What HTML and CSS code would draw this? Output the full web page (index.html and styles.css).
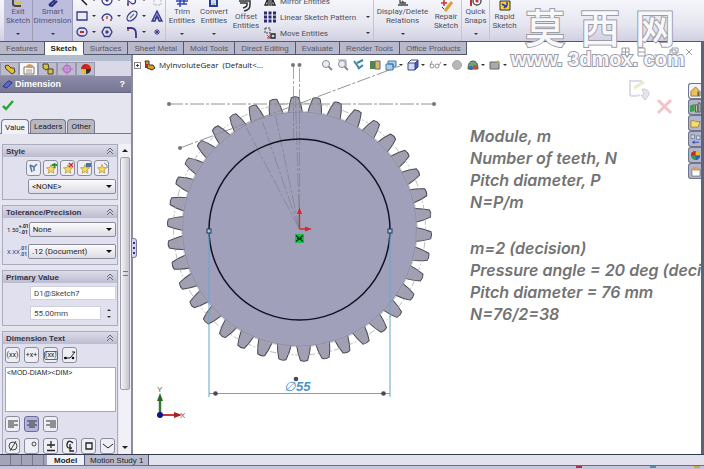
FILE: index.html
```html
<!DOCTYPE html>
<html lang="en">
<head>
<meta charset="utf-8">
<title>MyInvoluteGear</title>
<link rel="stylesheet" href="styles.css">
</head>
<body>
<svg class="defs" aria-hidden="true">
  <defs>
    <path id="t1" d="M-7-113V-116C-6.500-121-5.200-127-3.600-131.500Q0-133 3.600-131.500C5.200-127 6.500-121 7-116V-113"/>
    <g id="t2"><use href="#t1"/><use href="#t1" transform="rotate(9.4737)"/></g>
    <g id="t4"><use href="#t2"/><use href="#t2" transform="rotate(18.9474)"/></g>
    <g id="t8"><use href="#t4"/><use href="#t4" transform="rotate(37.8947)"/></g>
    <g id="t16"><use href="#t8"/><use href="#t8" transform="rotate(75.7895)"/></g>
    <g id="t32"><use href="#t16"/><use href="#t16" transform="rotate(151.5789)"/></g>
    <path id="star" d="M6 2.500 7.200 5.600 10.500 5.800 8 8 8.800 11.200 6 9.500 3.200 11.200 4 8 1.500 5.800 4.800 5.600Z" fill="#f8d860" stroke="#b09030" stroke-width=".7"/>
    <g id="lens" fill="none" stroke="#8a8a94"><circle cx="5" cy="5" r="3.500" fill="#e8eef4"/><path d="M7.500 7.500 11 11" stroke-width="2"/></g>
    <g id="wheel"><circle cx="6" cy="6" r="5" fill="#e8c020"/><path d="M6 6V1A5 5 0 0 1 11 6Z" fill="#d02828"/><path d="M6 6H11A5 5 0 0 1 6 11Z" fill="#303038"/><path d="M6 6V1A5 5 0 0 0 1 6Z" fill="#c82020"/></g>
  </defs>
</svg>

<header class="ribbon">
  <button class="tool on exit"><svg viewBox="0 0 16 7"><path d="M3 0V4Q3 6 6 6H11" fill="none" stroke="#504830" stroke-width="2"/><path d="M5 1 9 4 12 1" fill="none" stroke="#d8c040" stroke-width="2"/></svg><span>Exit<br>Sketch</span><i class="arrow"></i></button>
  <button class="tool on smart"><svg viewBox="0 0 16 7"><path d="M4 5 10 0M4 5 7 6 12 1" fill="none" stroke="#2a2a80" stroke-width="2"/></svg><span>Smart<br>Dimension</span><i class="arrow"></i></button>
  <div class="shapes">
    <button aria-label="Line"><svg viewBox="0 0 12 12"><path d="M1 1 11 11" stroke="#222" stroke-width="1.500"/></svg><i class="arrow"></i></button>
    <button aria-label="Circle"><svg viewBox="0 0 12 12"><circle cx="6" cy="6" r="5"/><circle cx="6" cy="6" r="1" fill="#c33"/></svg><i class="arrow"></i></button>
    <button aria-label="Spline"><svg viewBox="0 0 12 12"><path d="M2 0V12M3 7C7 13 12 8 8 4"/><path d="M1 10h2" stroke="#a33"/></svg><i class="arrow"></i></button>
    <button aria-label="Plane"><svg viewBox="0 0 12 12"><path d="M3 1H10V11H3Z" stroke="#c8c8d0" stroke-dasharray="2 1"/></svg></button>
    <button aria-label="Rectangle"><svg viewBox="0 0 12 12"><path d="M1 2H11V10H1Z"/></svg><i class="arrow"></i></button>
    <button aria-label="Arc"><svg viewBox="0 0 12 12"><path d="M1 9A5 5 0 1 1 11 9"/><path d="M1 10h2M9 10h2M6 6v3" stroke="#a33"/></svg><i class="arrow"></i></button>
    <button aria-label="Ellipse"><svg viewBox="0 0 12 12"><ellipse cx="6" cy="6" rx="6" ry="3.500" transform="rotate(-45 6 6)"/><path d="M4 8 8 4" stroke="#777"/></svg><i class="arrow"></i></button>
    <button aria-label="Text"><svg viewBox="0 0 12 12"><path d="M1 11 6 1 11 11H8L6 6 4 11ZM4 8H8" fill="#9a9ae0"/></svg></button>
    <button aria-label="Slot"><svg viewBox="0 0 12 12"><rect x="1" y="2" width="10" height="8" rx="4"/><path d="M4 6H8" stroke="#a33" stroke-width="2"/></svg><i class="arrow"></i></button>
    <button aria-label="Polygon"><svg viewBox="0 0 12 12"><path d="M3.500 1.500H8.500L11 6 8.500 10.500H3.500L1 6Z"/><circle cx="6" cy="6" r="1" fill="#44a"/></svg></button>
    <button aria-label="Fillet"><svg viewBox="0 0 12 12"><path d="M1 2H5Q10 2 10 8V12" stroke-width="1.800"/><path d="M1 4h2" stroke="#a33"/></svg><i class="arrow"></i></button>
    <button aria-label="Point"><svg viewBox="0 0 12 12"><path d="M6 3V9M3 6H9M4 4 8 8M8 4 4 8" stroke-width="1"/></svg></button>
  </div>
  <button class="tool trim"><svg viewBox="0 0 16 7"><path d="M2 1H14M3 4H13M6 0V7M10 0V4" fill="none" stroke="#3448b8" stroke-width="1.500"/></svg><span>Trim<br>Entities</span><i class="arrow"></i></button>
  <button class="tool convert"><svg viewBox="0 0 16 7"><path d="M4 0V6H11V0" fill="#cde" stroke="#2a3aa0" stroke-width="2"/><path d="M6 4h3" stroke="#9a6"/></svg><span>Convert<br>Entities</span><i class="arrow"></i></button>
  <button class="tool offset low"><svg viewBox="0 0 16 12"><path d="M2 3H9V5Q9 7 5 8M1 1H12V5Q12 10 6 11" fill="none" stroke="#333" stroke-width="1.500"/></svg><span>Offset<br>Entities</span></button>
  <div class="list">
    <button><svg viewBox="0 0 12 12"><path d="M1 10 4 3V10ZM11 10 8 3V10ZM6 1V11" fill="none" stroke="#222" stroke-width="1.300"/></svg>Mirror Entities</button>
    <button><svg viewBox="0 0 12 12"><path d="M0 2H12M0 6H12M0 10H12" stroke="#2a2a70" stroke-width="3" stroke-dasharray="3 1.500"/></svg>Linear Sketch Pattern<i class="arrow"></i></button>
    <button><svg viewBox="0 0 12 12"><path d="M1 1H6V6H1Z" fill="none" stroke="#444" stroke-dasharray="2 1"/><path d="M7 7H11V11H7Z" fill="none" stroke="#222" stroke-width="1.300"/><path d="M3 8 6 11M6 8V11H3" fill="none" stroke="#b33"/></svg>Move Entities<i class="arrow"></i></button>
  </div>
  <button class="tool relations"><svg viewBox="0 0 16 7"><path d="M3 5H13M5 0V3H11M7 1L9 3" fill="none" stroke="#444" stroke-width="1.300"/></svg><span>Display/Delete<br>Relations</span><i class="arrow"></i></button>
  <button class="tool repair low"><svg viewBox="0 0 16 12"><path d="M3 3H9M6 0V6" stroke="#c33" stroke-width="1.500"/><path d="M7 11 14 2" stroke="#e0a030" stroke-width="3"/><path d="M4 7 6 9" stroke="#333"/></svg><span>Repair<br>Sketch</span></button>
  <button class="tool snaps"><svg viewBox="0 0 16 7"><circle cx="9" cy="1" r="4" fill="none" stroke="#444" stroke-width="1.300"/><path d="M3 0V6" stroke="#b33" stroke-width="2"/><circle cx="9" cy="1" r="1.500" fill="#b33"/></svg><span>Quick<br>Snaps</span><i class="arrow"></i></button>
  <button class="tool rapid low"><svg viewBox="0 0 16 12"><path d="M3 1H13V10H3Z" fill="#f4d030" stroke="#333"/><path d="M5 4 10 7M10 2V5L7 8" stroke="#2a3ab0" stroke-width="1.500" fill="none"/></svg><span>Rapid<br>Sketch</span></button>
</header>

<div class="work">
  <nav class="tabs">
    <button>Features</button><button class="active">Sketch</button><button>Surfaces</button><button>Sheet Metal</button><button>Mold Tools</button><button>Direct Editing</button><button>Evaluate</button><button>Render Tools</button><button>Office Products</button>
  </nav>

  <div class="columns">
    <aside class="panel">
      <div class="panel-icons">
        <button aria-label="Features tree"><svg viewBox="0 0 12 12"><path d="M1 3 4 2 7 5 10 5 11 9 8 11 2 6Z" fill="#e8c030" stroke="#443"/></svg></button>
        <button class="active" aria-label="Properties"><svg viewBox="0 0 12 12"><path d="M1 4H11V11H1Z" fill="#fff" stroke="#776"/><path d="M3 3 6 1 10 2 9 5 5 5Z" fill="#d89850"/><path d="M3 7H9M3 9H9" stroke="#a88"/></svg></button>
        <button aria-label="Configurations"><svg viewBox="0 0 12 12"><path d="M1 1H6L7 5 4 7 1 5ZM6 6H11V11H6Z" fill="#d8c040" stroke="#443"/></svg></button>
        <button aria-label="Targets"><svg viewBox="0 0 12 12"><circle cx="6" cy="6" r="3.500" fill="none" stroke="#b868c8" stroke-width="1.500"/><path d="M6 0V12M0 6H12" stroke="#c070d0"/></svg></button>
        <button aria-label="Appearance"><svg viewBox="0 0 12 12"><use href="#wheel"/></svg></button>
      </div>
      <h1><svg viewBox="0 0 12 12"><path d="M1 8 7 2 11 4 5 10Z" fill="#5868c8" stroke="#223080"/></svg>Dimension<a href="#">?</a></h1>
      <button class="ok" aria-label="OK"><svg viewBox="0 0 12 12"><path d="M1 7 4 10 11 2" fill="none" stroke="#28a838" stroke-width="2.500"/></svg></button>
      <div class="subtabs"><button class="active">Value</button><button>Leaders</button><button>Other</button></div>
      <div class="scroll">
        <div class="groups">
          <section class="style-group">
            <h2>Style<svg viewBox="0 0 8 8"><path d="M1 4 4 1 7 4M1 7 4 4 7 7"/></svg></h2>
            <div class="row right">
              <button class="sq" aria-label="Default"><svg viewBox="0 0 12 12"><path d="M2 3 4 10M2 3 6 5 9 2M6 5 6 9" fill="none" stroke="#5878a0" stroke-width="1.500"/></svg></button>
              <button class="sq" aria-label="Add"><svg viewBox="0 0 12 12"><use href="#star"/><path d="M7 3H12M9.500 1V6" stroke="#289038" stroke-width="1.800"/></svg></button>
              <button class="sq" aria-label="Delete"><svg viewBox="0 0 12 12"><use href="#star"/><path d="M7 1 11 5M11 1 7 5" stroke="#c83030" stroke-width="1.500"/></svg></button>
              <button class="sq" aria-label="Save"><svg viewBox="0 0 12 12"><use href="#star"/><path d="M7 1H12V5H7Z" fill="#5070a8"/></svg></button>
              <button class="sq" aria-label="Load"><svg viewBox="0 0 12 12"><use href="#star"/><path d="M8 1 11 3V6" fill="none" stroke="#7888a0"/></svg></button>
            </div>
            <div class="row"><span class="pick"><select aria-label="Style"><option>&lt;NONE&gt;</option></select></span></div>
          </section>
          <section class="tol-group">
            <h2>Tolerance/Precision<svg viewBox="0 0 8 8"><path d="M1 4 4 1 7 4M1 7 4 4 7 7"/></svg></h2>
            <div class="row"><label for="tol" class="glyph">1.50<b>+.01<br>-.01</b></label><span class="pick"><select id="tol"><option>None</option></select></span></div>
            <div class="row"><label for="prec" class="glyph blue">X.XX<b>.01<br>.01</b></label><span class="pick"><select id="prec"><option>.12 (Document)</option></select></span></div>
          </section>
          <section class="value-group">
            <h2>Primary Value<svg viewBox="0 0 8 8"><path d="M1 4 4 1 7 4M1 7 4 4 7 7"/></svg></h2>
            <div class="row"><input aria-label="Dimension name" value="D1@Sketch7"></div>
            <div class="row"><input aria-label="Dimension value" value="55.00mm"><span class="spin"><i></i><i></i></span></div>
          </section>
          <section class="text-group">
            <h2>Dimension Text<svg viewBox="0 0 8 8"><path d="M1 4 4 1 7 4M1 7 4 4 7 7"/></svg></h2>
            <div class="row tools">
              <button class="sq">(xx)</button><button class="sq">+x+</button><button class="sq"><span class="ring">(xx)</span></button>
              <button class="sq" aria-label="Offset text"><svg viewBox="0 0 12 12"><path d="M0 9H6L11 3M8 3H11" fill="none" stroke="#222"/><circle cx="1.500" cy="9" r="1.300"/><circle cx="9" cy="9" r="1.300"/></svg></button>
            </div>
            <textarea aria-label="Dimension text" spellcheck="false">&lt;MOD-DIAM&gt;&lt;DIM&gt;</textarea>
            <div class="row tools">
              <button class="sq" aria-label="Left"><svg viewBox="0 0 12 12"><path d="M1 3H11M1 5H7M1 7H11M1 9H7" stroke="#333"/></svg></button>
              <button class="sq down" aria-label="Centre"><svg viewBox="0 0 12 12"><path d="M1 3H11M3 5H9M1 7H11M3 9H9" stroke="#333"/></svg></button>
              <button class="sq" aria-label="Right"><svg viewBox="0 0 12 12"><path d="M1 3H11M5 5H11M1 7H11M5 9H11" stroke="#333"/></svg></button>
            </div>
            <div class="row tools symbols">
              <button class="sq" aria-label="Diameter"><svg viewBox="0 0 12 12"><circle cx="6" cy="6" r="4" fill="none" stroke="#444"/><path d="M3 11 9 1" stroke="#444"/></svg></button>
              <button class="sq" aria-label="Degree"><svg viewBox="0 0 12 12"><circle cx="8" cy="4" r="2" fill="none" stroke="#444"/></svg></button>
              <button class="sq" aria-label="Plus/minus"><svg viewBox="0 0 12 12"><path d="M2 5H10M6 1V8M2 10.500H10" stroke="#222" stroke-width="1.300"/></svg></button>
              <button class="sq" aria-label="Centerline"><svg viewBox="0 0 12 12"><path d="M9 3Q4-1 3 4T8 8M6 4V11H10" fill="none" stroke="#222" stroke-width="1.300"/></svg></button>
              <button class="sq" aria-label="Square"><svg viewBox="0 0 12 12"><path d="M3 3H9V9H3Z" fill="none" stroke="#222" stroke-width="1.300"/></svg></button>
              <button class="sq" aria-label="Countersink"><svg viewBox="0 0 12 12"><path d="M1 4 6 8 11 4" fill="none" stroke="#222"/></svg></button>
            </div>
          </section>
        </div>
        <div class="bar"><i class="up"></i><div class="thumb"><span></span></div><i class="dn"></i></div>
      </div>
    </aside>
    <div class="splitter"><button aria-label="Collapse panel"><i></i><i></i><i></i></button></div>

    <main class="view">
      <svg class="drawing" viewBox="133 55 568 400" width="568" height="400">
        <g transform="translate(299.500 229)">
          <g transform="rotate(-2)" fill="#a0a0b2" stroke="#4a4a55" stroke-width="1">
            <use href="#t32"/><use href="#t4" transform="rotate(303.158)"/><use href="#t2" transform="rotate(341.053)"/>
          </g>
          <circle r="117" fill="#a0a0ba" stroke="#8a8aa0" stroke-width=".8"/>
          <circle r="126" fill="none" stroke="#a0a0a8" stroke-width=".7" stroke-dasharray="7 2 2 2"/>
          <circle r="118" fill="none" stroke="#aaaab4" stroke-width=".5"/>
          <path d="M0 0-53-101M0 0-37-107M0 0-24-113M0 0-4-131M0 0V-164M-6-164V-90" fill="none" stroke="#808090" stroke-width=".7" stroke-dasharray="14 2 3 2"/>
          <circle r="90.500" cy=".5" fill="none" stroke="#111122" stroke-width="1.500"/>
        </g>
        <g stroke="#88888e" stroke-width=".9" stroke-dasharray="14 2 3 2"><path d="M169 104H434M180 148 400 66"/></g>
        <g fill="#777"><circle cx="169" cy="104" r="2"/><circle cx="434" cy="104" r="2"/><circle cx="180" cy="148" r="2"/><circle cx="293" cy="65" r="2"/><circle cx="299.500" cy="65" r="2"/></g>
        <path d="M209 231V397M390 231V397M209 393.500H390" stroke="#68a4cc" fill="none"/>
        <g fill="#9cc8e0" stroke="#203850"><rect x="207" y="229" width="4" height="4"/><rect x="388" y="229" width="4" height="4"/></g>
        <g fill="#444a58"><circle cx="215.500" cy="393.500" r="2.300"/><circle cx="383.500" cy="393.500" r="2.300"/><circle cx="296" cy="379" r="2.300"/></g>
        <text class="dim" x="284" y="391">∅</text><text class="dim bold" x="296" y="391">55</text>
        <g stroke="#d82830" fill="#d82830"><path d="M299.500 229V213M299.500 229H306" fill="none" stroke-width="1.300"/><path d="M299.500 207 302 214H297ZM312 229 305 226.500V231.500Z" stroke="none"/></g>
        <path d="M295 234H304V243H295Z" fill="#18c048"/><path d="M296 235.500 303 241.500M303 235.500 296 241.500M297 238.500H302" stroke="#06391a" stroke-width="1.200"/>
        <path d="M160 415V398" stroke="#387838" stroke-width="2.500"/><path d="M160 393 163 401H157Z" fill="#286828"/>
        <path d="M160 415H175" stroke="#c83838" stroke-width="2"/><path d="M182 415 174 412V418Z" fill="#a82020"/><circle cx="160" cy="415" r="3" fill="#101090"/>
        <text class="axis y" x="157" y="392">Y</text><text class="axis x" x="180" y="418">X</text>
      </svg>

      <div class="topbar">
        <div class="tree"><span class="plus"></span><svg viewBox="0 0 12 12"><path d="M1 2H5V6H9L11 9 8 11 3 9Z" fill="#d8a020" stroke="#333"/><path d="M1 5H4V9H1Z" fill="#b82818"/></svg>MyInvoluteGear&nbsp; (Default&lt;...</div>
        <div class="hud">
          <button aria-label="Zoom to fit"><svg viewBox="0 0 12 12"><use href="#lens"/></svg></button>
          <button aria-label="Zoom to area"><svg viewBox="0 0 12 12"><use href="#lens"/><path d="M1 1H9V8" fill="none" stroke="#999"/></svg></button>
          <button aria-label="Previous view"><svg viewBox="0 0 12 12"><path d="M1 2 6 9M4 4 10 1M5 10 10 6" stroke="#3888a8" stroke-width="2"/></svg></button>
          <button aria-label="Section"><svg viewBox="0 0 12 12"><path d="M1 2H6V10H1Z" fill="#508848"/><path d="M6 2H11V10H6Z" fill="#d8b868" stroke="#666"/></svg></button>
          <button aria-label="View orientation"><svg viewBox="0 0 12 12"><path d="M1 5H8V11H1ZM3 2H11V8H8V5H3Z" fill="#a8d0e8" stroke="#4878a8"/></svg><i class="arrow"></i></button>
          <button aria-label="Display style"><svg viewBox="0 0 12 12"><path d="M1 4H8V11H1Z" fill="#d0dcff"/><path d="M8 4 11 1V8L8 11Z" fill="#5058b0"/><path d="M1 4 4 1H11L8 4H1V11H8L11 8V1M8 4V11" fill="none" stroke="#404880"/></svg><i class="arrow"></i></button>
          <button aria-label="Hide/show"><svg viewBox="0 0 12 12"><g fill="none" stroke="#8a949c"><circle cx="3" cy="7" r="2"/><circle cx="8" cy="7" r="2"/><path d="M1 6 3 2M10 6 12 3"/></g></svg><i class="arrow"></i></button>
          <button aria-label="Edit appearance"><svg viewBox="0 0 12 12"><circle cx="6" cy="6" r="4.500" fill="#b8b8b8" stroke="#aaa"/></svg></button>
          <button aria-label="Apply scene"><svg viewBox="0 0 12 12"><path d="M1 10Q1 2 6 2T11 10Z" fill="#68a878" stroke="#555"/><circle cx="4" cy="9" r="2" fill="#3868b8"/><circle cx="8" cy="8" r="2" fill="#c84838"/></svg><i class="arrow"></i></button>
          <button aria-label="View settings"><svg viewBox="0 0 12 12"><path d="M1 3H10V10H1Z" fill="#aaa" stroke="#666"/><path d="M8 1 11 3 8 6Z" fill="#a8b850"/></svg><i class="arrow"></i></button>
        </div>
      </div>

      <div class="notes">
        <p>Module, m</p><p>Number of teeth, N</p><p>Pitch diameter, P</p><p>N=P/m</p><p class="gap">m=2 (decision)</p><p>Pressure angle = 20 deg (decision)</p><p>Pitch diameter = 76 mm</p><p>N=76/2=38</p>
      </div>

      <svg class="corner" viewBox="0 0 46 42" aria-hidden="true"><path d="M14 4H2V18Q4 20 12 18" fill="none" stroke="#dcdce8" stroke-width="2"/><path d="M6 11 16 5" stroke="#e8ecc8" stroke-width="3"/><path d="M14 12Q22 12 21 18L17 23 13 18Q18 20 14 12Z" fill="#e4e4f0" stroke="#ccccdc"/><path d="M30 23 43 36M43 23 30 36" stroke="#f0c4c8" stroke-width="3"/></svg>

      <div class="task">
        <button class="active" aria-label="Resources"><svg viewBox="0 0 12 12"><path d="M1 6 6 1 11 6V11H1Z" fill="#f0c050" stroke="#875"/><path d="M8 6H10V11H8Z" fill="#666"/></svg></button>
        <button aria-label="Library"><svg viewBox="0 0 12 12"><path d="M0 4 5 2V10L0 11Z" fill="#38a048"/><path d="M6 3H8V11H6ZM9 1H11V11H9Z" fill="#d8d8c0" stroke="#555"/></svg></button>
        <button aria-label="Explorer"><svg viewBox="0 0 12 12"><path d="M1 3H5L6 4H11L9 10H1Z" fill="#f4dc78" stroke="#a08830"/></svg></button>
        <button aria-label="Palette"><svg viewBox="0 0 12 12"><path d="M1 1H5V5H1ZM7 2H11V6H7Z" fill="#c8d8e8" stroke="#789"/><path d="M2 9 5 7V11Z" fill="#2848c0"/><path d="M5 9H10" stroke="#2848c0"/></svg></button>
        <button aria-label="Appearances"><svg viewBox="0 0 12 12"><circle cx="6" cy="6" r="5" fill="#38a048"/><path d="M6 6V1A5 5 0 0 1 11 6Z" fill="#e8c020"/><path d="M6 6V1A5 5 0 0 0 1 6Z" fill="#c82828"/><path d="M6 6H11A5 5 0 0 1 6 11Z" fill="#3858b8"/></svg></button>
        <button aria-label="Custom properties"><svg viewBox="0 0 12 12"><path d="M2 4H11V11H2Z" fill="#fff" stroke="#777"/><path d="M1 3 5 1 10 2 9 5H4Z" fill="#d89868"/></svg></button>
      </div>
    </main>
  </div>
</div>

<footer>
  <div class="sheets">
    <div class="navs"><button aria-label="First"></button><button aria-label="Previous"></button><button aria-label="Next"></button><button aria-label="Last"></button></div>
    <button class="active">Model</button><button>Motion Study 1</button>
  </div>
  <div class="status"><i class="red"></i><i class="teal"></i><i class="gold"></i></div>
</footer>

<svg class="mdi" viewBox="0 0 72 10" aria-hidden="true"><g fill="none" stroke="#999ca8"><path d="M1 1H8V9H1ZM4.500 1V9M1 5H8M17 1H24V9H17ZM17 5H24M33 8H39M51 1H57V6H51ZM49 3H55V9H49ZM65 2 71 8M71 2 65 8"/></g></svg>
<div class="mark" lang="zh"><div class="han"><span>莫</span><span>西</span><span>网</span></div><div class="url">www. 3dmox. com</div></div>
</body>
</html>
```
FILE: styles.css
```css
* { box-sizing: border-box; margin: 0; padding: 0; }
body { height: 100vh; display: flex; flex-direction: column; overflow: hidden; position: relative; background: #fff; font: 8px/9px Roboto, "Liberation Sans", sans-serif; color: #222; }
button { font: inherit; color: inherit; border: 0; background: none; white-space: nowrap; }
svg { display: block; flex: none; }
.defs { position: absolute; width: 0; height: 0; }
.arrow { width: 0; height: 0; border: 2px solid transparent; border-top-color: #333; border-bottom: 0; flex: none; }

.ribbon { flex: none; height: 41px; display: flex; overflow: hidden; padding-left: 4px; background: linear-gradient(#f5f5fb, #e6e6f0 60%, #d0d0e2); color: #50505c; }
.tool { flex: none; display: flex; flex-direction: column; align-items: center; height: 41px; }
.tool svg { width: 16px; height: 7px; }
.tool.low svg { height: 12px; }
.tool .arrow { margin-top: 8px; }
.tool.on { background: #bcbcdc; border-right: 1px solid #9c9cb8; color: #55557c; }
.exit { width: 29px; }
.smart { width: 40px; }
.shapes { flex: none; display: grid; grid-template-columns: repeat(4, 25px); grid-template-rows: repeat(3, 16px); width: 92px; margin-top: -8px; padding-left: 3px; }
.shapes button { display: flex; align-items: center; gap: 4px; }
.shapes svg { width: 12px; height: 12px; fill: none; stroke: #38388c; stroke-width: 1.3; }
.trim { width: 33px; border-left: 1px solid #c4c4d4; }
.convert { width: 32px; }
.offset { width: 32px; }
.list { flex: none; width: 112px; margin-top: -7px; padding-left: 2px; display: grid; grid-template-rows: repeat(3, 16px); border-right: 1px solid #c4c4d4; }
.list button { display: flex; align-items: center; gap: 4px; text-align: left; }
.list svg { width: 12px; height: 12px; }
.list .arrow { margin-left: auto; margin-right: 3px; }
.relations { width: 57px; }
.repair { width: 30px; }
.snaps { width: 28px; border-left: 1px solid #c4c4d4; }
.rapid { width: 30px; border-left: 1px solid #c4c4d4; }

.work { flex: 1; min-height: 0; display: flex; flex-direction: column; border-right: 3px solid #5c6478; }
.tabs { flex: none; display: flex; height: 14px; border-top: 1px solid #55586c; }
.tabs button { padding: 0 6px; border-right: 1px solid #55586c; border-bottom: 1px solid #55586c; background: #b8b8cc; color: #555562; font-family: "Liberation Sans", sans-serif; }
.tabs .active { background: #fff; border-bottom-color: #fff; font-weight: bold; color: #222; }
.columns { flex: 1; min-height: 0; display: flex; }

.panel { flex: none; width: 131px; display: flex; flex-direction: column; background: #e5e5f0; }
.panel-icons { flex: none; display: flex; height: 21px; padding: 7px 0 0 0; background: linear-gradient(#b4bcd0 0 6px, #d8d8e6 6px); }
.panel-icons button { width: 19px; height: 14px; display: grid; place-items: center; background: #bcbccc; border: 1px solid #9898b0; }
.panel-icons .active { background: #f6f6fa; }
.panel-icons svg { width: 12px; height: 12px; }
h1 { flex: none; display: flex; align-items: center; gap: 2px; height: 17px; padding: 0 6px 0 2px; background: linear-gradient(#8c8ca8, #777794); border-bottom: 1px solid #66667e; color: #fff; font: bold 9px/14px "Liberation Sans", sans-serif; }
h1 svg { width: 11px; height: 11px; }
h1 a { margin-left: auto; color: #fff; text-decoration: none; }
.ok { width: 16px; height: 20px; padding: 4px 0 0 2px; }
.ok svg { width: 12px; height: 12px; }
.subtabs { flex: none; display: flex; gap: 1px; margin-top: 6px; padding-left: 1px; height: 15px; border-bottom: 1px solid #77778c; }
.subtabs button { height: 14px; padding: 0 3px; background: #b8b8c4; border: 1px solid #77778c; border-bottom: 0; border-radius: 4px 4px 0 0; }
.subtabs .active { background: #f0f0f8; height: 15px; }
.scroll { flex: 1; min-height: 0; margin-top: 10px; display: flex; }
.groups { flex: 1; min-width: 0; overflow: hidden; padding: 0 1px 0 2px; display: flex; flex-direction: column; gap: 5px; }
section { flex: none; border: 1px solid #aaaac0; background: #e0e0ee; }
h2 { display: flex; align-items: center; justify-content: space-between; height: 12px; padding: 0 3px; background: linear-gradient(#dcdce8, #bcbcd0); font: bold 8px/11px "Liberation Sans", sans-serif; color: #33334a; }
h2 svg { width: 8px; height: 8px; fill: none; stroke: #66667c; }
.row { display: flex; align-items: center; padding: 0 1px 0 2px; }
.sq { width: 15px; height: 16px; flex: none; display: grid; place-items: center; background: #eeeef6; border: 1px solid #8c8c9c; border-radius: 3px; }
.sq svg { width: 12px; height: 12px; }
.sq.down { background: #b4b4dc; border-color: #6c6c94; }
.ring { border: 1px solid #666; border-radius: 2px; line-height: 7px; font-size: 7px; }
.pick { position: relative; width: 88px; margin-left: auto; }
.pick::after { content: ""; position: absolute; right: 4px; top: 6px; border: 3px solid transparent; border-top-color: #111; border-bottom: 0; pointer-events: none; }
select { appearance: none; display: block; width: 100%; height: 15px; padding: 0 3px; border: 1px solid #8c8c9c; border-radius: 2px; background: linear-gradient(#fbfbfd, #dcdce4); font: inherit; color: #222; }
.style-group { height: 56px; }
.style-group .right { height: 22px; padding: 0 8px 0 0; justify-content: flex-end; gap: 2px; }
.tol-group { height: 60px; }
.tol-group .row { height: 22px; }
.glyph { display: flex; align-items: center; font-size: 6px; line-height: 7px; padding-left: 2px; color: #222; }
.glyph b { font-size: 5px; line-height: 6px; }
.blue { color: #3848a0; }
.value-group { height: 56px; }
.value-group .row { height: 20px; padding-left: 27px; }
input { flex: 1; min-width: 0; height: 14px; border: 1px solid #d0d0dc; background: #fff; padding: 0 3px; font: inherit; color: #444; }
.spin { width: 15px; display: flex; flex-direction: column; align-items: center; gap: 5px; }
.spin i { border: 2px solid transparent; border-bottom-color: #333; border-top: 0; }
.spin i + i { border-top: 2px solid #333; border-bottom: 0; }
.text-group .tools { gap: 4px; height: 22px; font-size: 7px; }
textarea { display: block; width: calc(100% - 3px); height: 45px; margin: 1px 0 1px 2px; padding: 1px; border: 1px solid #a8a8b8; resize: none; background: #fff; font: 7px/8px "Liberation Sans", sans-serif; color: #222; }
.bar { flex: none; width: 12px; display: flex; flex-direction: column; align-items: center; background: #f0f0f6; }
.bar i { margin: 5px 0; border: 3px solid transparent; border-bottom-color: #222; border-top: 0; }
.bar .dn { margin-top: auto; border-top: 3px solid #222; border-bottom: 0; }
.thumb { width: 10px; height: 75%; display: grid; place-items: center; background: linear-gradient(90deg, #f4f4f8, #c4c4cc); border: 1px solid #a0a0ac; border-radius: 2px; }
.thumb span { width: 5px; height: 5px; border-block: 1px solid #777; }
.splitter { flex: none; width: 2px; background: #8c8c98; position: relative; }
.splitter button { position: absolute; left: 0; top: 183px; width: 6px; height: 20px; background: #d4d4ee; border: 1px solid #7878a0; border-radius: 0 3px 3px 0; display: flex; flex-direction: column; justify-content: space-evenly; align-items: center; z-index: 2; }
.splitter i { width: 2px; height: 2px; background: #30309c; }

.view { flex: 1; min-width: 0; position: relative; overflow: hidden; background: #fff; }
.drawing { position: absolute; left: 0; top: 0; }
.dim { font: italic 13px "Liberation Sans", sans-serif; fill: #4c94cc; }
.bold { font-weight: bold; }
.axis { font: 8px "Liberation Sans", sans-serif; }
.axis.y { fill: #387838; }
.axis.x { fill: #c83838; }
.topbar { position: relative; display: flex; align-items: center; height: 20px; }
.tree { flex: none; width: 188px; display: flex; align-items: center; gap: 3px; padding-left: 1px; white-space: nowrap; font: 8px/10px "Open Sans", "Noto Sans", sans-serif; color: #222; }
.tree svg { width: 12px; height: 12px; }
.plus { width: 7px; height: 7px; border: 1px solid #888; background: linear-gradient(#444, #444) center / 3px 1px no-repeat, linear-gradient(#444, #444) center / 1px 3px no-repeat; }
.hud { display: flex; align-items: center; gap: 4px; }
.hud button { display: flex; align-items: center; gap: 2px; }
.hud svg { width: 12px; height: 12px; }
.notes { position: absolute; left: 337px; top: 70px; white-space: nowrap; color: #737373; font: italic 600 16px/22px Inter, "Open Sans", sans-serif; font-feature-settings: "cv11"; }
.notes .gap { margin-top: 24px; }
.corner { position: absolute; right: 27px; top: 22px; width: 46px; height: 42px; }
.task { position: absolute; right: 0; top: 28px; width: 13px; display: flex; flex-direction: column; }
.task button { height: 16px; display: grid; place-items: center; background: #b4b4cc; border: 1px solid #70748c; border-right: 0; border-radius: 3px 0 0 3px; }
.task .active { background: #f4f4f8; }
.task svg { width: 11px; height: 11px; }

footer { flex: none; border-top: 1px solid #333a50; }
.sheets { display: flex; height: 10px; background: #e2e2ec; font: 8px/9px "Liberation Sans", sans-serif; }
.sheets > button { padding: 0 5px; background: #b8b8cc; border-right: 1px solid #55586c; }
.sheets .active { background: #f0f0f8; font-weight: bold; padding: 0 7px; }
.navs { display: flex; width: 47px; background: #a4a4b8; }
.navs button { width: 11px; border-right: 1px solid #77788c; }
.status { height: 4px; padding-right: 4px; background: #c4c4dc; border-top: 1px solid #66708c; display: flex; justify-content: flex-end; }
.status i { height: 2px; width: 6px; background: #a83040; }
.status .teal { margin-left: 68px; background: #5090b0; }
.status .gold { margin-left: 38px; background: #d8a040; }

.mdi { position: absolute; right: 11px; top: 47px; width: 72px; height: 10px; }
.mark { position: absolute; left: 511px; top: 4px; width: 180px; color: #f8f8fb; -webkit-text-stroke: 2px #9c9ca6; paint-order: stroke fill; pointer-events: none; }
.han { display: flex; gap: 15px; padding-left: 14px; font: 500 40px/44px "Noto Sans CJK SC", sans-serif; }
.url { font: bold 20px/22px "Liberation Sans", sans-serif; white-space: nowrap; }
```
